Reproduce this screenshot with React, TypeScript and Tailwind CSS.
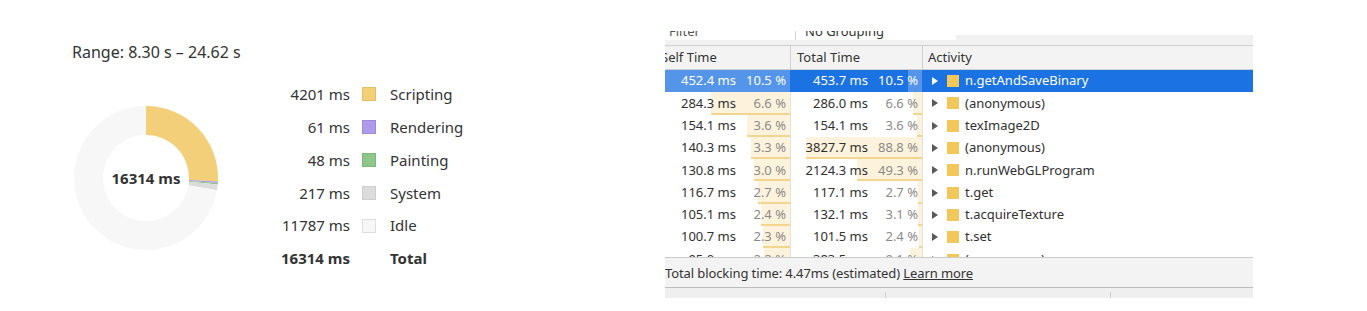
import React from 'react';

const FONT = { fontFamily: '"Noto Sans", "Open Sans", sans-serif' };

const slices = [
  { label: 'Scripting', value: 4201, color: '#f3cf79', border: '#e6bf63' },
  { label: 'Rendering', value: 61, color: '#af9ce9', border: '#9e89df' },
  { label: 'Painting', value: 48, color: '#8ec68b', border: '#7db77a' },
  { label: 'System', value: 217, color: '#dcdcdc', border: '#cfcfcf' },
  { label: 'Idle', value: 11787, color: '#f7f7f7', border: '#dedede' },
];
const total = 16314;

type Row = { self: string; sp: number; total: string; tp: number; name: string; selected?: boolean };

const rows: Row[] = [
  { self: '452.4', sp: 10.5, total: '453.7', tp: 10.5, name: 'n.getAndSaveBinary', selected: true },
  { self: '284.3', sp: 6.6, total: '286.0', tp: 6.6, name: '(anonymous)' },
  { self: '154.1', sp: 3.6, total: '154.1', tp: 3.6, name: 'texImage2D' },
  { self: '140.3', sp: 3.3, total: '3827.7', tp: 88.8, name: '(anonymous)' },
  { self: '130.8', sp: 3.0, total: '2124.3', tp: 49.3, name: 'n.runWebGLProgram' },
  { self: '116.7', sp: 2.7, total: '117.1', tp: 2.7, name: 't.get' },
  { self: '105.1', sp: 2.4, total: '132.1', tp: 3.1, name: 't.acquireTexture' },
  { self: '100.7', sp: 2.3, total: '101.5', tp: 2.4, name: 't.set' },
  { self: '95.0', sp: 2.2, total: '383.5', tp: 9.1, name: '(anonymous)' },
];
const maxSelf = 10.5;

function arc(cx: number, cy: number, ro: number, ri: number, a0: number, a1: number) {
  const p = (r: number, a: number) => [cx + r * Math.sin(a), cy - r * Math.cos(a)];
  const large = a1 - a0 > Math.PI ? 1 : 0;
  const [x0, y0] = p(ro, a0);
  const [x1, y1] = p(ro, a1);
  const [x2, y2] = p(ri, a1);
  const [x3, y3] = p(ri, a0);
  return `M${x0} ${y0} A${ro} ${ro} 0 ${large} 1 ${x1} ${y1} L${x2} ${y2} A${ri} ${ri} 0 ${large} 0 ${x3} ${y3} Z`;
}

const Donut: React.FC = () => {
  let a = 0;
  return (
    <div className="relative w-[144px] h-[144px] shrink-0 mt-[44px] ml-[2px]">
      <svg width="144" height="144" viewBox="0 0 144 144">
        {slices.map((s) => {
          const a0 = a;
          const a1 = a + (s.value / total) * Math.PI * 2 - 0.0001;
          a = a1;
          return <path key={s.label} d={arc(72, 72, 72, 43, a0, a1)} fill={s.color} />;
        })}
      </svg>
      <div className="absolute inset-0 flex items-center justify-center text-[15px] font-bold text-[#333]">
        16314 ms
      </div>
    </div>
  );
};

const Legend: React.FC = () => (
  <div className="ml-[62px] mt-[16px] text-[15px] text-[#333]">
    {slices.map((s) => (
      <div key={s.label} className="flex items-center h-[32.8px]">
        <span className="w-[70px] text-right">{s.value} ms</span>
        <span
          className="ml-[12px] w-[14px] h-[14px] border"
          style={{ backgroundColor: s.color, borderColor: s.border }}
        />
        <span className="ml-[14px]">{s.label}</span>
      </div>
    ))}
    <div className="flex items-center h-[32.8px] font-bold">
      <span className="w-[70px] text-right">{total} ms</span>
      <span className="ml-[40px]">Total</span>
    </div>
  </div>
);

const Bar: React.FC<{ frac: number; selected?: boolean }> = ({ frac, selected }) => (
  <div
    className={
      selected
        ? 'absolute right-0 top-0 bottom-0 bg-white/25'
        : 'absolute right-0 top-0 bottom-0 bg-[#fdf3dc] border-b-2 border-[#f2d68f]'
    }
    style={{ width: `${Math.min(frac, 1) * 100}%` }}
  />
);

const TimeCell: React.FC<{ v: string; pct: number; frac: number; w: string; selected?: boolean }> = ({
  v,
  pct,
  frac,
  w,
  selected,
}) => (
  <div className={`relative h-full shrink-0 border-r ${selected ? 'border-transparent' : 'border-[#e2e2e2]'} ${w}`}>
    <Bar frac={frac} selected={selected} />
    <div className="relative flex items-center justify-end h-full pr-[4px]">
      <span className={selected ? 'text-white' : 'text-[#303030]'}>{v} ms</span>
      <span className={`w-[50px] text-right ${selected ? 'text-white' : 'text-[#8a8a8a]'}`}>
        {pct.toFixed(1)} %
      </span>
    </div>
  </div>
);

const BottomUp: React.FC = () => (
  <div className="w-[588px] mt-[31px] self-start flex flex-col overflow-hidden text-[13px] text-[#333]">
    <div className="flex h-[15px] border-b border-[#cfcfcf] bg-[linear-gradient(to_bottom,#ffffff_4px,#f1f1f1_4px)]">
      <div className="w-[131px] h-[9px] bg-white border-r border-[#d6d6d6] overflow-hidden">
        <div className="-mt-[6px] pl-[4px] leading-[13px] text-[#555]">Filter</div>
      </div>
      <div className="w-[160px] h-[9px] bg-white overflow-hidden">
        <div className="-mt-[6px] pl-[9px] leading-[13px] text-[#333]">No Grouping</div>
      </div>
    </div>
    <div className="flex h-[24px] bg-[#f3f3f3] border-b border-[#cfcfcf] items-center">
      <div className="w-[126px] h-full flex items-center border-r border-[#d0d0d0]">
        <span className="-ml-[4px]">Self Time</span>
      </div>
      <div className="w-[132px] h-full flex items-center border-r border-[#d0d0d0] pl-[6px]">Total Time</div>
      <div className="flex-1 h-full flex items-center pl-[5px]">Activity</div>
    </div>
    <div className="h-[187px] overflow-hidden">
      {rows.map((r, i) => (
        <div key={i} className={`flex h-[22.3px] items-center ${r.selected ? 'bg-[#1b72e3]' : 'bg-white'}`}>
          <TimeCell v={r.self} pct={r.sp} frac={r.sp / maxSelf} w="w-[126px]" selected={r.selected} />
          <TimeCell v={r.total} pct={r.tp} frac={r.tp / 100} w="w-[132px]" selected={r.selected} />
          <div className="flex-1 flex items-center h-full pl-[9px]">
            <svg width="6" height="8" viewBox="0 0 6 8">
              <polygon points="0,0 6,4 0,8" fill={r.selected ? '#ffffff' : '#5a5a5a'} />
            </svg>
            <span className="ml-[9px] w-[12px] h-[12px] bg-[#f3c75a]" />
            <span className={`ml-[6px] ${r.selected ? 'text-white' : 'text-[#303030]'}`}>{r.name}</span>
          </div>
        </div>
      ))}
    </div>
    <div className="h-[30px] border-t border-[#cbcbcb] bg-[#f3f3f3] pt-[7px] leading-[17px] tracking-[-0.1px]">
      Total blocking time: 4.47ms (estimated) <span className="underline">Learn more</span>
    </div>
    <div className="flex h-[11px] border-t border-[#bdbdbd] bg-[#efefef]">
      <div className="w-[220px]" />
      <div className="w-[225px] border-l border-[#cfcfcf] mt-[4px]" />
      <div className="flex-1 border-l border-[#cfcfcf] mt-[4px]" />
    </div>
  </div>
);

export default function App() {
  return (
    <div className="w-[1367px] h-[311px] bg-white flex overflow-hidden" style={FONT}>
      <div className="w-[665px] shrink-0 pl-[72px] pt-[42px] text-[#333]">
        <div className="text-[16px] leading-[20px]">Range: 8.30 s – 24.62 s</div>
        <div className="flex items-start">
          <Donut />
          <Legend />
        </div>
      </div>
      <BottomUp />
    </div>
  );
}
